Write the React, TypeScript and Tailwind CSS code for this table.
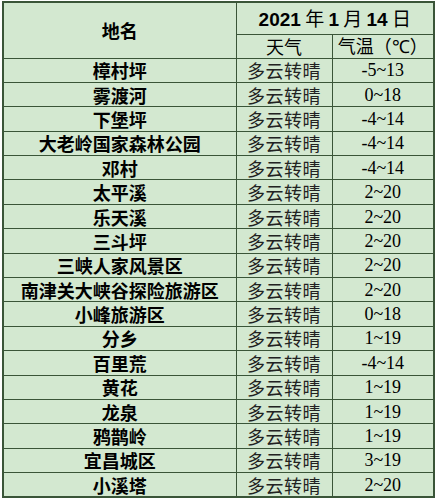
import React from "react";

const rows: [string, string][] = [
  ["樟村坪", "-5~13"],
  ["雾渡河", "0~18"],
  ["下堡坪", "-4~14"],
  ["大老岭国家森林公园", "-4~14"],
  ["邓村", "-4~14"],
  ["太平溪", "2~20"],
  ["乐天溪", "2~20"],
  ["三斗坪", "2~20"],
  ["三峡人家风景区", "2~20"],
  ["南津关大峡谷探险旅游区", "2~20"],
  ["小峰旅游区", "0~18"],
  ["分乡", "1~19"],
  ["百里荒", "-4~14"],
  ["黄花", "1~19"],
  ["龙泉", "1~19"],
  ["鸦鹊岭", "1~19"],
  ["宜昌城区", "3~19"],
  ["小溪塔", "2~20"],
];

const cjk = "font-['Noto_Sans_CJK_SC',sans-serif]";
const cell = "border border-[#3a5538] p-0 text-center leading-none";

export default function App() {
  return (
    <div className="min-h-[500px] w-[435px] bg-white pl-[2px] pt-[1px]">
      <table className="w-[431px] table-fixed border-collapse border-2 border-[#3a5538] bg-[#d3e8d0] text-black">
        <colgroup>
          <col className="w-[233px]" />
          <col className="w-[96px]" />
          <col className="w-[102px]" />
        </colgroup>
        <tbody>
          <tr className="h-[32px]">
            <td rowSpan={2} className={`${cell} ${cjk} text-[18px] font-bold`}>
              地名
            </td>
            <td colSpan={2} className={`${cell} text-[19px] font-bold`}>
              <span className="font-['Liberation_Sans',sans-serif]">2021</span>
              <span className={`${cjk} font-normal`}> 年 </span>
              <span className="font-['Liberation_Sans',sans-serif]">1</span>
              <span className={`${cjk} font-normal`}> 月 </span>
              <span className="font-['Liberation_Sans',sans-serif]">14</span>
              <span className={`${cjk} font-normal`}> 日</span>
            </td>
          </tr>
          <tr className="h-[24px]">
            <td className={`${cell} ${cjk} text-[18px]`}>天气</td>
            <td className={`${cell} ${cjk} text-[18px]`}>
              气温（<span className="font-['Liberation_Serif',serif]">℃</span>）
            </td>
          </tr>
          {rows.map(([name, temp]) => (
            <tr key={name} className="h-[24.4px]">
              <td className={`${cell} ${cjk} text-[18px] font-bold`}>{name}</td>
              <td className={`${cell} ${cjk} text-[18px] tracking-[0.5px] text-[#222]`}>多云转晴</td>
              <td className={`${cell} font-['Liberation_Serif',serif] text-[18px]`}>{temp}</td>
            </tr>
          ))}
        </tbody>
      </table>
    </div>
  );
}
